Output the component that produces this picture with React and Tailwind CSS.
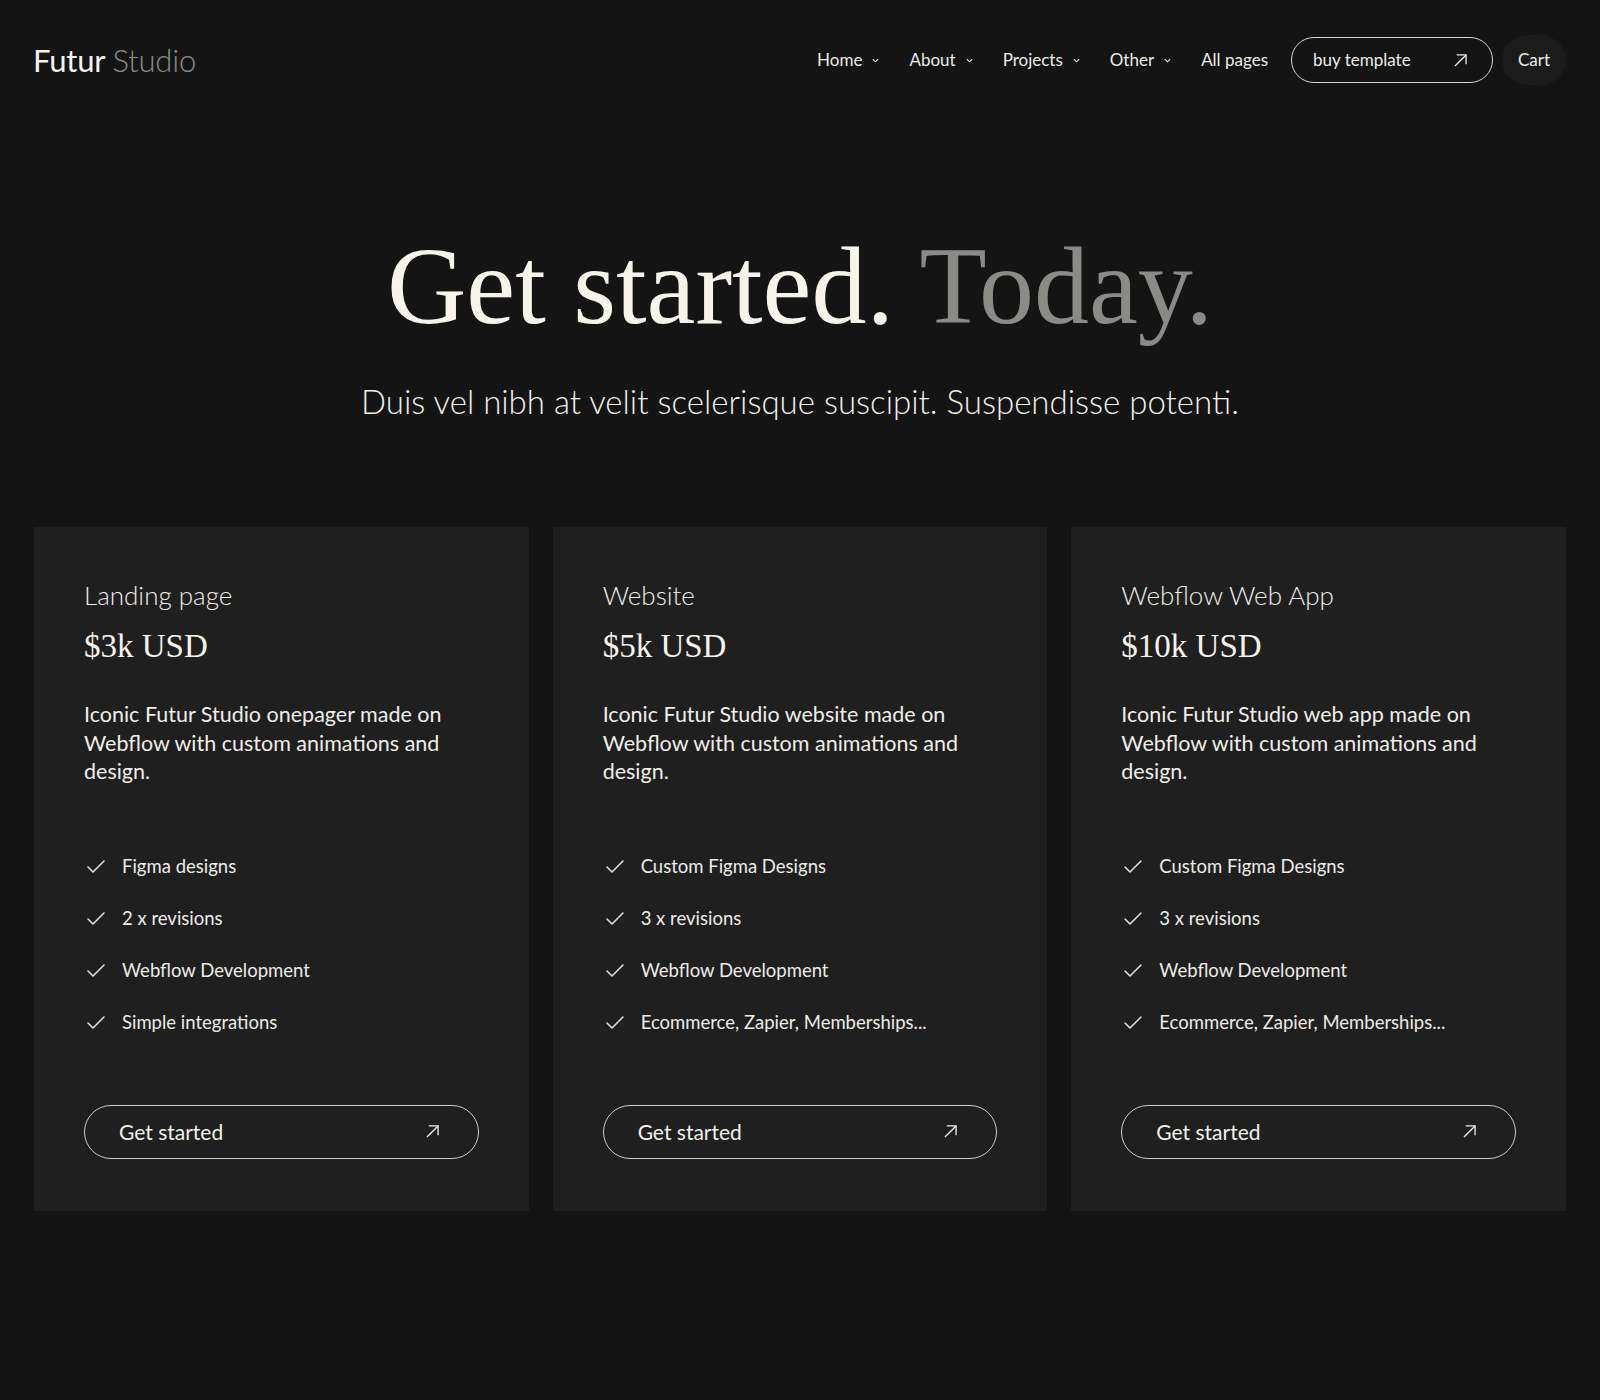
import { Check } from "lucide-react";

const plans = [
  {
    name: "Landing page",
    price: "$3k USD",
    desc: "Iconic Futur Studio onepager made on Webflow with custom animations and design.",
    features: ["Figma designs", "2 x revisions", "Webflow Development", "Simple integrations"],
  },
  {
    name: "Website",
    price: "$5k USD",
    desc: "Iconic Futur Studio website made on Webflow with custom animations and design.",
    features: ["Custom Figma Designs", "3 x revisions", "Webflow Development", "Ecommerce, Zapier, Memberships..."],
  },
  {
    name: "Webflow Web App",
    price: "$10k USD",
    desc: "Iconic Futur Studio web app made on Webflow with custom animations and design.",
    features: ["Custom Figma Designs", "3 x revisions", "Webflow Development", "Ecommerce, Zapier, Memberships..."],
  },
];

const Arrow = ({ className }) => (
  <svg viewBox="0 0 14 14" fill="none" stroke="currentColor" strokeWidth="1.4" className={className}>
    <path d="M1 13 13 1" />
    <path d="M3 1h10v10" />
  </svg>
);

const Chevron = () => (
  <svg viewBox="0 0 8 5" fill="none" stroke="currentColor" strokeWidth="1.3" className="w-[7px] h-[5px]">
    <path d="M1 1l3 3 3-3" />
  </svg>
);

const NavItem = ({ label, drop }) => (
  <div className="flex items-center gap-[10px] text-[17px] text-[#ecebe6]">
    <span>{label}</span>
    {drop && <Chevron />}
  </div>
);

const App = () => {
  return (
    <div className="bg-[#141414] min-h-[1400px] text-[#f2f0ea] font-['Lato',sans-serif]">
      {/* Navigation Bar */}
      <header className="flex items-center justify-between pl-[33px] pr-[34px] pt-[35px]">
        <div className="text-[31px] leading-none tracking-[-0.2px]">
          <span className="text-[#f4f2ec]">Futur</span>{" "}
          <span className="font-light text-[#8c8c88]">Studio</span>
        </div>
        <nav className="flex items-center">
          <div className="flex items-center gap-[30px] mr-[23px]">
            <NavItem label="Home" drop />
            <NavItem label="About" drop />
            <NavItem label="Projects" drop />
            <NavItem label="Other" drop />
            <NavItem label="All pages" />
          </div>
          <button className="flex items-center justify-between w-[202px] h-[46px] pl-[21px] pr-[25px] rounded-full border border-[#d8d6d0] text-[17px] text-[#ecebe6]">
            <span>buy template</span>
            <Arrow className="w-[13px] h-[13px]" />
          </button>
          <button className="ml-[9px] w-[64px] h-[50px] rounded-full bg-[#1b1b1b] text-[17px] text-[#ecebe6]">
            Cart
          </button>
        </nav>
      </header>

      {/* Hero Section */}
      <section className="text-center mt-[146px]">
        <h1 className="font-['Liberation_Serif',serif] text-[110px] leading-none text-[#f6f3ea]">
          Get started. <span className="text-[#8b8a86]">Today.</span>
        </h1>
        <p className="mt-[40px] text-[33px] leading-[40px] font-light text-[#f2f0ea]">
          Duis vel nibh at velit scelerisque suscipit. Suspendisse potenti.
        </p>
      </section>

      {/* Pricing Cards */}
      <section className="grid grid-cols-3 gap-[24px] px-[34px] mt-[106px]">
        {plans.map((plan) => (
          <div key={plan.name} className="bg-[#1f1f1f] px-[50px] pt-[53px] pb-[52px]">
            <div className="text-[26px] leading-[31px] font-light text-[#f0eee8]">{plan.name}</div>
            <div className="mt-[15px] font-['Liberation_Serif',serif] text-[33px] leading-[40px] text-[#f6f3ea]">
              {plan.price}
            </div>
            <p className="mt-[34px] text-[21.5px] leading-[28.5px] text-[#efede7]">{plan.desc}</p>
            <ul className="mt-[69px] flex flex-col gap-[28px]">
              {plan.features.map((f) => (
                <li key={f} className="flex items-center h-[24px] gap-[14px] text-[18.5px] text-[#ecebe6]">
                  <Check size={24} strokeWidth={1.5} className="text-[#e6e4de]" />
                  <span>{f}</span>
                </li>
              ))}
            </ul>
            <button className="mt-[70px] w-full h-[54px] flex items-center justify-between pl-[34px] pr-[39px] rounded-full border border-[#cfcdc7] text-[21px] text-[#f2f0ea]">
              <span>Get started</span>
              <Arrow className="w-[13px] h-[13px]" />
            </button>
          </div>
        ))}
      </section>
    </div>
  );
};

export default App;
